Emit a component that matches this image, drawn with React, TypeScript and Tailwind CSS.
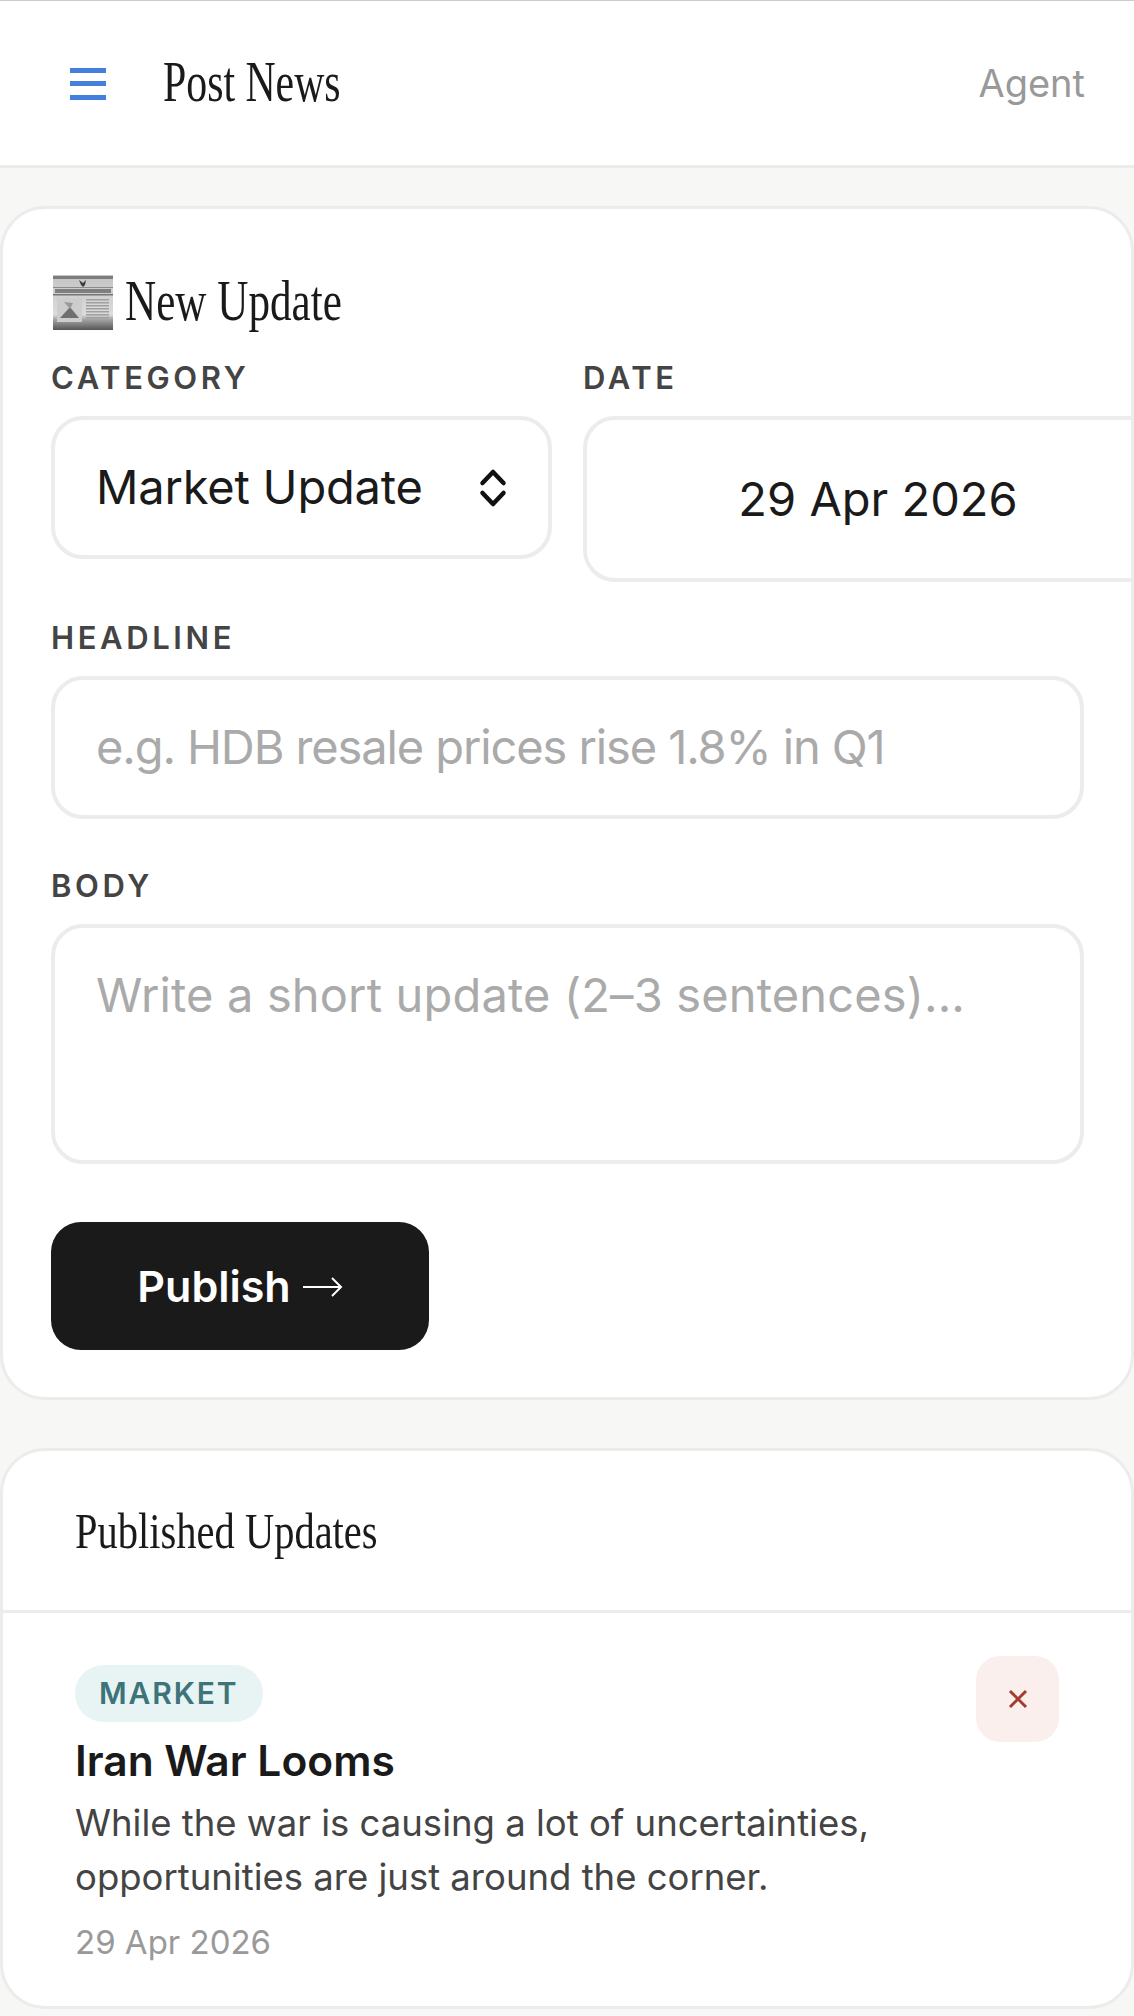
import React from 'react';

const sans = 'font-["Inter",sans-serif]';

function NewspaperIcon() {
  return (
    <svg width="60" height="55" viewBox="0 0 60 55" className="ml-[2px] shrink-0 blur-[0.4px]">
      <defs>
        <linearGradient id="paper" x1="0" y1="0" x2="0" y2="1">
          <stop offset="0" stopColor="#c4c4c4" />
          <stop offset="0.72" stopColor="#dcdcdc" />
          <stop offset="0.8" stopColor="#a8a8a8" />
          <stop offset="1" stopColor="#555555" />
        </linearGradient>
      </defs>
      <rect width="60" height="55" fill="url(#paper)" />
      <rect y="1" width="60" height="3" fill="#7d7d7d" />
      <path d="M26 5l4 3 3-3-1 5-2 2-2-2z" fill="#3c3c3c" />
      <rect y="12" width="60" height="1" fill="#8a8a8a" />
      <rect x="2" y="14" width="56" height="4" fill="#7f7f7f" />
      <rect y="19" width="60" height="1.5" fill="#777777" />
      <rect x="4" y="23" width="25" height="24" fill="#cdcdcd" />
      <path d="M7 43l10-11 9 11z" fill="#6f6f6f" />
      <path d="M11 27l9 1-3 6z" fill="#9a9a9a" />
      <g fill="#a0a0a0">
        <rect x="33" y="24" width="23" height="1.5" />
        <rect x="33" y="27" width="23" height="1.5" />
        <rect x="33" y="30" width="23" height="1.5" />
        <rect x="33" y="33" width="23" height="1.5" />
        <rect x="33" y="36" width="23" height="1.5" />
        <rect x="33" y="39" width="23" height="1.5" />
        <rect x="33" y="42" width="23" height="1.5" />
      </g>
    </svg>
  );
}

function FieldLabel({ children }: { children: React.ReactNode }) {
  return (
    <label className="block text-[31px] leading-[40px] font-semibold tracking-[3.6px] text-[#444444]">
      {children}
    </label>
  );
}

export default function App() {
  return (
    <div className={`${sans} h-[2016px] overflow-hidden bg-[#f7f7f5] text-[#1a1a1a]`}>
      <header className="flex h-[168px] items-center justify-between border-t border-b-[3px] border-t-[#cccccc] border-b-[#ececec] bg-white pr-[49px] pl-[70px]">
        <div className="flex items-center gap-[57px]">
          <svg width="36" height="32" viewBox="0 0 36 32" className="mt-[2px]">
            <rect width="36" height="5" fill="#4480db" />
            <rect y="13" width="36" height="5" fill="#4480db" />
            <rect y="27" width="36" height="5" fill="#4480db" />
          </svg>
          <div className='mb-[3px] w-[178px] font-["Liberation_Serif",serif] text-[57px] leading-[60px] whitespace-nowrap'>
            <span className="inline-block origin-left scale-x-[0.733]">Post News</span>
          </div>
        </div>
        <span className="text-[38px] leading-[48px] text-[#999999]">Agent</span>
      </header>

      <main className="flex flex-col gap-[48px] pt-[38px]">
        <section className="h-[1194px] overflow-hidden rounded-[45px] border-[3px] border-[#ececec] bg-white pt-[64px] pl-[48px]">
          <div className="flex h-[58px] items-center gap-[12px]">
            <NewspaperIcon />
            <h2 className='mb-[2px] font-["Liberation_Serif",serif] text-[57px] leading-[60px] font-normal whitespace-nowrap'>
              <span className="inline-block origin-left scale-x-[0.757]">New Update</span>
            </h2>
          </div>

          <div className="mt-[27px] flex w-[1200px] gap-[31px]">
            <div className="w-[501px] shrink-0">
              <FieldLabel>CATEGORY</FieldLabel>
              <div className="mt-[18px] flex h-[143px] items-center justify-between rounded-[32px] border-[4px] border-[#ececec] pr-[40px] pl-[41px] text-[47px] tracking-[-0.2px]">
                <span>Market Update</span>
                <svg width="30" height="44" viewBox="0 0 30 44" fill="none" stroke="#111111" strokeWidth="4.5" strokeLinecap="round" strokeLinejoin="round">
                  <path d="M4.5 17 15 6l10.5 11" />
                  <path d="M4.5 27 15 38l10.5-11" />
                </svg>
              </div>
            </div>
            <div className="w-[590px] shrink-0">
              <FieldLabel>DATE</FieldLabel>
              <div className="mt-[18px] flex h-[166px] items-center justify-center rounded-[32px] border-[4px] border-[#ececec] text-[47px]">
                29 Apr 2026
              </div>
            </div>
          </div>

          <div className="mt-[36px] w-[1033px]">
            <FieldLabel>HEADLINE</FieldLabel>
            <div className="mt-[18px] flex h-[143px] items-center rounded-[32px] border-[4px] border-[#ececec] pl-[41px] text-[47px] tracking-[-1.1px] text-[#aaaaaa]">
              e.g. HDB resale prices rise 1.8% in Q1
            </div>
          </div>

          <div className="mt-[47px] w-[1033px]">
            <FieldLabel>BODY</FieldLabel>
            <div className="mt-[18px] h-[240px] rounded-[32px] border-[4px] border-[#ececec] pt-[35px] pl-[41px] text-[47px] leading-[64px] tracking-[0.15px] text-[#aaaaaa]">
              Write a short update (2–3 sentences)...
            </div>
          </div>

          <button className="mt-[58px] flex h-[128px] w-[378px] items-center justify-center gap-[12px] rounded-[30px] bg-[#1a1a1a] text-[43px] font-semibold text-white">
            Publish
            <svg width="40" height="22" viewBox="0 0 40 22" fill="none" stroke="white" strokeWidth="2" className="mt-[1px]">
              <path d="M0 11h38" />
              <path d="M29 2l9 9-9 9" />
            </svg>
          </button>
        </section>

        <section className="h-[561px] overflow-hidden rounded-[45px] border-[3px] border-[#ececec] bg-white">
          <div className="flex h-[162px] items-center border-b-[3px] border-[#ececec] pl-[72px]">
            <h2 className='font-["Liberation_Serif",serif] text-[50px] leading-[56px] font-normal whitespace-nowrap'>
              <span className="inline-block origin-left scale-x-[0.81]">Published Updates</span>
            </h2>
          </div>
          <div className="flex justify-between pt-[43px] pr-[72px] pl-[72px]">
            <div className="pt-[9px]">
              <span className="inline-flex h-[57px] items-center rounded-full bg-[#e8f3f4] px-[24px] text-[30px] font-semibold tracking-[1.9px] text-[#3d7479]">
                MARKET
              </span>
              <h3 className="mt-[13px] text-[42.5px] leading-[52px] font-semibold">Iran War Looms</h3>
              <p className="mt-[9px] text-[36.5px] leading-[54px] text-[#444444]">
                While the war is causing a lot of uncertainties,
                <br />
                opportunities are just around the corner.
              </p>
              <p className="mt-[16px] text-[33px] leading-[44px] text-[#999999]">29 Apr 2026</p>
            </div>
            <button className="flex h-[86px] w-[83px] items-center justify-center rounded-[24px] bg-[#fbefed] text-[#a33b30]">
              <svg width="20" height="20" viewBox="0 0 20 20" fill="none" stroke="currentColor" strokeWidth="3">
                <path d="M2 2l16 16M18 2 2 18" />
              </svg>
            </button>
          </div>
        </section>
      </main>
    </div>
  );
}
